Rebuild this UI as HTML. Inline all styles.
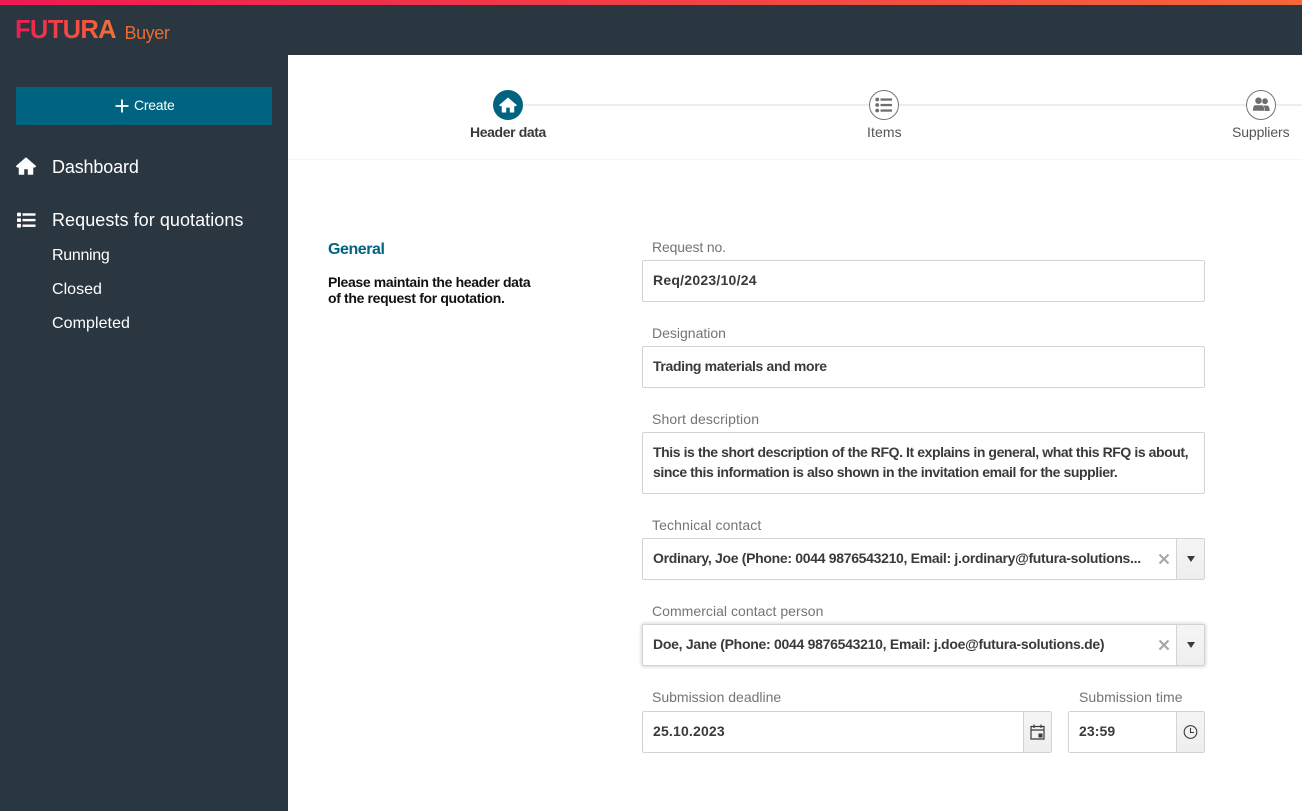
<!DOCTYPE html>
<html><head><meta charset="utf-8">
<style>
html,body{margin:0;padding:0;width:1302px;height:811px;overflow:hidden;background:#fff;font-family:"Liberation Sans",Arial,sans-serif}
div,span,svg{position:absolute;white-space:nowrap}
.nav{color:#fff;left:52px}
.lbl{color:#747474;font-size:14px;line-height:16px;left:652px}
.box{left:642px;width:561px;height:40px;border:1px solid #d3d3d3;border-radius:2px;background:#fff}
.val{color:#3a3a3a;font-size:14px;font-weight:bold;line-height:18px;left:653px}
.btn{background:linear-gradient(#f5f5f5,#eeeeee);border-left:1px solid #d3d3d3;top:0;right:0;width:27px;height:40px}
.arrow{width:0;height:0;border-left:4.5px solid transparent;border-right:4.5px solid transparent;border-top:6px solid #3a3a3a;left:10px;top:17px}
.step{font-size:14px;line-height:16px;color:#555;top:124px}
.circ{width:28px;height:28px;border:1px solid #747474;border-radius:50%;top:90px;background:#fff}
</style></head>
<body>
<div style="left:0;top:0;width:1302px;height:811px;background:#2a3640"></div>
<div style="left:0;top:0;width:1302px;height:5px;background:linear-gradient(90deg,#ee1a52,#f6663a)"></div>
<div style="left:288px;top:55px;width:1014px;height:756px;background:#fff"></div>

<div style="left:15px;top:15px;font-size:25.5px;line-height:30px;font-weight:bold;letter-spacing:-.65px;background:linear-gradient(90deg,#ee1c50,#f4703a);-webkit-background-clip:text;background-clip:text;color:transparent">FUTURA</div>
<div style="left:124.5px;top:22px;font-size:18px;line-height:22px;color:#ee6b2f;letter-spacing:-.42px">Buyer</div>

<div style="left:16px;top:87px;width:256px;height:38px;background:#006480;border-radius:1px"></div>
<svg style="left:115px;top:99px" width="14" height="14" viewBox="0 0 14 14"><path d="M7 0.5V13.5M0.5 7H13.5" stroke="#fff" stroke-width="1.8" fill="none"/></svg>
<div style="left:134px;top:97px;font-size:14px;line-height:16px;color:#fff;letter-spacing:-.25px">Create</div>

<svg style="left:16px;top:157px" width="20" height="18" viewBox="0 0 20 18"><path d="M10 0.5L0 9.2 1 10.3H3V17.5H8V12H12V17.5H17V10.3H19L20 9.2Z" fill="#fff" stroke="#fff" stroke-width=".5"/></svg>
<div class="nav" style="top:156px;font-size:18px;line-height:22px;letter-spacing:-.15px">Dashboard</div>

<svg style="left:16px;top:211px" width="20" height="18" viewBox="0 0 20 18"><g fill="#fff"><rect x="1" y="1.6" width="4" height="3.8" rx=".8"/><rect x="1" y="7.2" width="4" height="3.8" rx=".8"/><rect x="1" y="12.8" width="4" height="3.8" rx=".8"/><rect x="6.5" y="2.3" width="13" height="2.4"/><rect x="6.5" y="7.9" width="13" height="2.4"/><rect x="6.5" y="13.5" width="13" height="2.4"/></g></svg>
<div class="nav" style="top:209px;font-size:18px;line-height:22px;letter-spacing:.06px">Requests for quotations</div>
<div class="nav" style="top:246px;font-size:16px;line-height:19px;letter-spacing:-.3px">Running</div>
<div class="nav" style="top:280px;font-size:16px;line-height:19px;letter-spacing:.02px">Closed</div>
<div class="nav" style="top:314px;font-size:16px;line-height:19px;letter-spacing:.07px">Completed</div>

<!-- stepper -->
<div style="left:508px;top:104px;width:794px;height:2px;background:#ededed"></div>
<div style="left:288px;top:159px;width:1014px;height:1px;background:#f6f6f6"></div>

<div style="left:493px;top:90px;width:30px;height:30px;border-radius:50%;background:#006480"></div>
<svg style="left:499px;top:97px" width="18" height="16" viewBox="0 0 20 18"><path d="M10 0.5L0 9.2 1 10.3H3V17.5H8V12H12V17.5H17V10.3H19L20 9.2Z" fill="#fff"/></svg>
<div class="step" style="left:470px;font-weight:bold;color:#3a3a3a;letter-spacing:-.38px">Header data</div>

<div class="circ" style="left:869px"></div>
<svg style="left:875px;top:97px" width="18" height="16" viewBox="0 0 18 16"><g fill="#6e6e6e"><circle cx="2.2" cy="2.5" r="1.9"/><circle cx="2.2" cy="8" r="1.9"/><circle cx="2.2" cy="13.5" r="1.9"/><rect x="5.5" y="1.4" width="11.5" height="2.3"/><rect x="5.5" y="6.9" width="11.5" height="2.3"/><rect x="5.5" y="12.4" width="11.5" height="2.3"/></g></svg>
<div class="step" style="left:867px;letter-spacing:.1px">Items</div>

<div class="circ" style="left:1246px"></div>
<svg style="left:1252px;top:97px" width="18" height="15" viewBox="0 0 18 15"><g fill="#6e6e6e"><circle cx="13" cy="4.2" r="2.9"/><path d="M10 8.5H15C16.8 8.5 17.5 10.5 17.7 14H12.5Z"/><circle cx="6.5" cy="3.7" r="3.5" stroke="#fff" stroke-width=".5"/><path d="M3 8H10C11.5 8 12.4 10.5 12.8 14H0.5C.8 10.5 1.5 8 3 8Z" stroke="#fff" stroke-width=".5"/></g></svg>
<div class="step" style="left:1232px;letter-spacing:-.1px">Suppliers</div>

<!-- left text -->
<div style="left:328px;top:241px;font-size:16px;line-height:18px;font-weight:bold;color:#006480;letter-spacing:-.45px">General</div>
<div style="left:328px;top:274px;font-size:14px;line-height:16px;font-weight:bold;color:#111;letter-spacing:-.35px">Please maintain the header data<br>of the request for quotation.</div>

<!-- fields -->
<div class="lbl" style="top:239px;letter-spacing:-.15px">Request no.</div>
<div class="box" style="top:260px"></div>
<div class="val" style="top:271px;letter-spacing:.24px">Req/2023/10/24</div>

<div class="lbl" style="top:325px">Designation</div>
<div class="box" style="top:346px"></div>
<div class="val" style="top:357px;letter-spacing:-.35px">Trading materials and more</div>

<div class="lbl" style="top:411px;letter-spacing:.12px">Short description</div>
<div class="box" style="top:432px;height:60px"></div>
<div class="val" style="top:442px;line-height:20px;letter-spacing:-.42px">This is the short description of the RFQ. It explains in general, what this RFQ is about,<br>since this information is also shown in the invitation email for the supplier.</div>

<div class="lbl" style="top:517px;letter-spacing:.12px">Technical contact</div>
<div class="box" style="top:538px"><div class="btn"><div class="arrow"></div></div>
<svg style="left:515px;top:14px" width="12" height="12" viewBox="0 0 12 12"><path d="M1.5 1.5L10.5 10.5M10.5 1.5L1.5 10.5" stroke="#a5a5a5" stroke-width="2"/></svg></div>
<div class="val" style="top:549px;letter-spacing:-.31px">Ordinary, Joe (Phone: 0044 9876543210, Email: j.ordinary@futura-solutions...</div>

<div class="lbl" style="top:603px;letter-spacing:.04px">Commercial contact person</div>
<div class="box" style="top:624px;box-shadow:0 0 3px 1px #d8d8d8"><div class="btn"><div class="arrow"></div></div>
<svg style="left:515px;top:14px" width="12" height="12" viewBox="0 0 12 12"><path d="M1.5 1.5L10.5 10.5M10.5 1.5L1.5 10.5" stroke="#a5a5a5" stroke-width="2"/></svg></div>
<div class="val" style="top:635px;letter-spacing:-.28px">Doe, Jane (Phone: 0044 9876543210, Email: j.doe@futura-solutions.de)</div>

<div class="lbl" style="top:689px">Submission deadline</div>
<div class="box" style="top:711px;width:408px"><div class="btn"><svg style="left:6px;top:12px" width="15" height="16" viewBox="0 0 15 16"><path d="M1 2.5H14V15H1ZM1 6H14M4 .5V4M11 .5V4" fill="none" stroke="#3a3a3a" stroke-width="1.2"/><rect x="8.5" y="9.5" width="4" height="4" fill="#3a3a3a"/></svg></div></div>
<div class="val" style="top:722px;letter-spacing:.18px">25.10.2023</div>

<div class="lbl" style="top:689px;left:1079px;letter-spacing:.06px">Submission time</div>
<div class="box" style="top:711px;left:1068px;width:135px"><div class="btn"><svg style="left:6px;top:12px" width="15" height="16" viewBox="0 0 15 16"><circle cx="7.5" cy="8" r="6.3" fill="none" stroke="#3a3a3a" stroke-width="1.1"/><path d="M7.5 4V8.5H11" fill="none" stroke="#3a3a3a" stroke-width="1.1"/></svg></div></div>
<div class="val" style="top:722px;left:1079px;letter-spacing:.1px">23:59</div>
</body></html>
